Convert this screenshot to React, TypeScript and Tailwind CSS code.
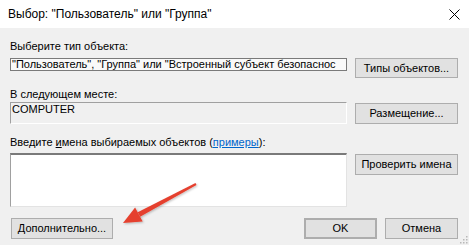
const btn =
  "flex items-center justify-center border border-[#adadad] bg-[#e1e1e1] text-[11px] leading-none text-black";

function Button({ children, className = "" }: { children: React.ReactNode; className?: string }) {
  return <div className={`${btn} ${className}`}>{children}</div>;
}

export default function App() {
  return (
    <div className="relative h-[245px] w-[469px] overflow-hidden bg-[#f0f0f0] font-['Liberation_Sans',Arial,sans-serif] text-black">
      {/* title bar */}
      <div className="flex h-[28px] items-center justify-between bg-white pl-[8px] pr-[9px]">
        <span className="text-[12px]">Выбор: "Пользователь" или "Группа"</span>
        <svg width="11" height="11" viewBox="0 0 11 11" className="mr-[0px]">
          <path d="M0.5 0.5 L10.5 10.5 M10.5 0.5 L0.5 10.5" stroke="#000" strokeWidth="1" />
        </svg>
      </div>

      <div className="flex flex-col pl-[10px] pr-[11px] text-[11px]">
        <div className="mt-[12px] h-[13px] leading-[13px]">Выберите тип объекта:</div>
        <div className="mt-[5px] flex h-[20px] items-start gap-[8px]">
          <div className="h-[13px] w-[337px] overflow-hidden whitespace-nowrap border border-[#7a7a7a] bg-[#f9f9f9] pl-[1px] leading-[11px]">
            "Пользователь", "Группа" или "Встроенный субъект безопаснос
          </div>
          <Button className="h-[20px] w-[103px]">Типы объектов...</Button>
        </div>

        <div className="mt-[10px] h-[13px] leading-[13px]">В следующем месте:</div>
        <div className="mt-[1px] flex items-start gap-[8px]">
          <div className="h-[22px] w-[337px] border-t border-l border-t-[#a0a0a0] border-l-[#a0a0a0] border-b border-r border-b-white border-r-white pl-[1px] leading-[13px]">
            COMPUTER
          </div>
          <Button className="mt-[1px] h-[21px] w-[103px]">Размещение...</Button>
        </div>

        <div className="mt-[12px] h-[13px] leading-[13px]">
          Введите <span className="underline">и</span>мена выбираемых объектов (
          <span className="text-[#0066cc] underline">примеры</span>):
        </div>
        <div className="mt-[4px] flex items-start gap-[8px]">
          <div className="h-[54px] w-[337px] border-t-2 border-l border-t-[#7a7a7a] border-l-[#a0a0a0] border-b border-r border-b-[#e3e3e3] border-r-[#e3e3e3] bg-white" />
          <Button className="mt-[1px] h-[21px] w-[103px]">Проверить имена</Button>
        </div>

        <div className="mt-[11px] flex items-center">
          <Button className="ml-[1px] h-[21px] w-[102px]">Дополнительно...</Button>
          <div className="flex-1" />
          <Button className="h-[21px] w-[73px] border-2 border-[#0078d7]">OK</Button>
          <Button className="ml-[8px] h-[21px] w-[73px]">Отмена</Button>
        </div>
      </div>

      {/* resize grip */}
      <svg className="absolute right-[1px] bottom-[1px]" width="10" height="10" viewBox="0 0 10 10">
        {[
          [8, 2],
          [5, 5],
          [8, 5],
          [2, 8],
          [5, 8],
          [8, 8],
        ].map(([x, y]) => (
          <rect key={`${x}-${y}`} x={x} y={y} width="1.5" height="1.5" fill="#b8b8b8" />
        ))}
      </svg>

      {/* red annotation arrow */}
      <svg className="pointer-events-none absolute left-0 top-0" width="469" height="245" viewBox="0 0 469 245">
        <defs>
          <filter id="sh" x="-20%" y="-20%" width="140%" height="140%">
            <feDropShadow dx="1" dy="1" stdDeviation="1" floodColor="#000" floodOpacity="0.25" />
          </filter>
        </defs>
        <g filter="url(#sh)" fill="#e5402f">
          <polygon points="196.5,184.9 195.5,183.1 137.7,212.3 140.1,216.7" />
          <polygon points="123,223 142.7,221.6 135.1,207.4" />
        </g>
      </svg>
    </div>
  );
}
